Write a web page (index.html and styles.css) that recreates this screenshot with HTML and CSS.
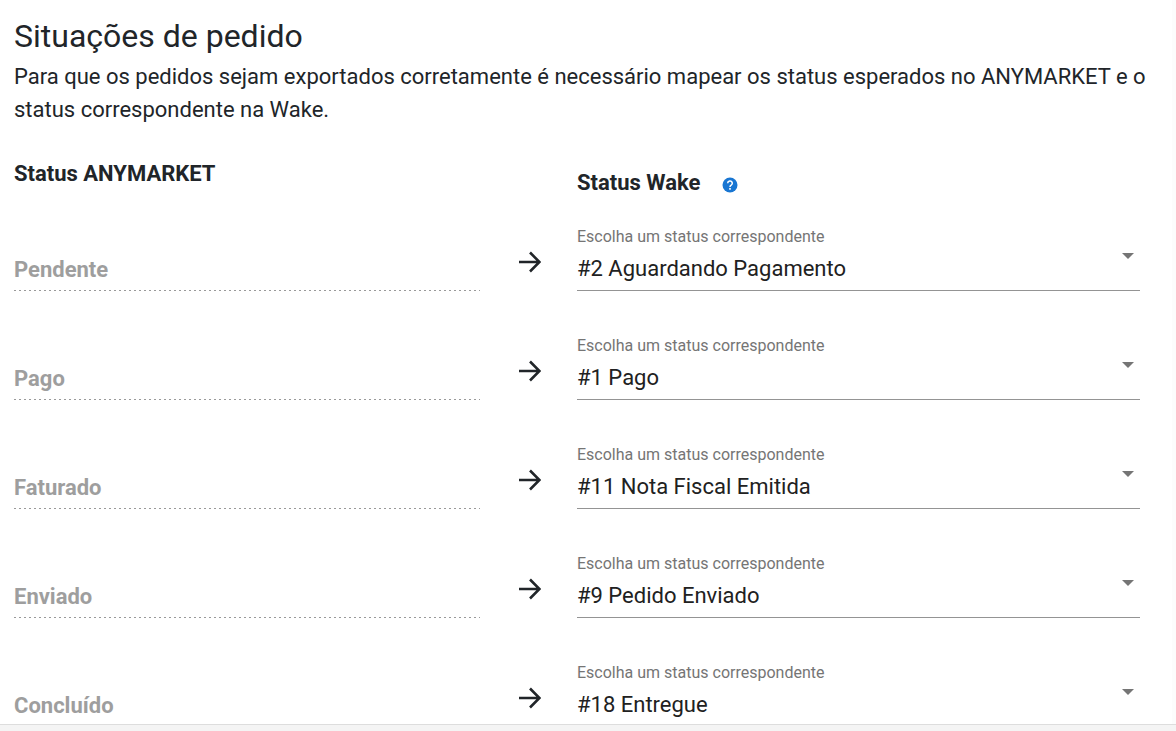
FILE: index.html
```html
<!DOCTYPE html>
<html lang="pt-BR">
<head>
<meta charset="utf-8">
<title>Situações de pedido</title>
<link rel="stylesheet" href="styles.css">
</head>
<body>
<main class="panel">
  <h1 class="title">Situações de pedido</h1>
  <p class="intro">Para que os pedidos sejam exportados corretamente é necessário mapear os status esperados no ANYMARKET e o status correspondente na Wake.</p>
  <div class="row heads">
    <h2 class="head" id="head-any">Status ANYMARKET</h2>
    <div class="head-wake">
      <h2 class="head">Status Wake</h2>
      <button class="help" type="button" aria-label="Ajuda">
        <svg viewBox="0 0 16 16" width="16" height="16"><circle cx="8" cy="8" r="7.5" fill="#1976d2"/><path d="M5.7 6.3a2.3 2.3 0 1 1 3.5 1.9c-.8.5-1.2.8-1.2 1.7" fill="none" stroke="#fff" stroke-width="1.5"/><path d="M7.2 11.1h1.6v1.6H7.2z" fill="#fff"/></svg>
      </button>
    </div>
  </div>
  <div class="row">
    <input class="source" type="text" value="Pendente" aria-labelledby="head-any" disabled>
    <svg class="arrow" viewBox="0 0 24 24"><path d="M2 12h20M13 2.500l9.500 9.500-9.500 9.500"/></svg>
    <div class="field">
      <label class="label" for="s1">Escolha um status correspondente</label>
      <select class="select" id="s1"><option>#2 Aguardando Pagamento</option></select>
      <svg class="caret" viewBox="0 0 12 6"><path d="M0 0h12L6 6z"/></svg>
    </div>
  </div>
  <div class="row">
    <input class="source" type="text" value="Pago" aria-labelledby="head-any" disabled>
    <svg class="arrow" viewBox="0 0 24 24"><path d="M2 12h20M13 2.500l9.500 9.500-9.500 9.500"/></svg>
    <div class="field">
      <label class="label" for="s2">Escolha um status correspondente</label>
      <select class="select" id="s2"><option>#1 Pago</option></select>
      <svg class="caret" viewBox="0 0 12 6"><path d="M0 0h12L6 6z"/></svg>
    </div>
  </div>
  <div class="row">
    <input class="source" type="text" value="Faturado" aria-labelledby="head-any" disabled>
    <svg class="arrow" viewBox="0 0 24 24"><path d="M2 12h20M13 2.500l9.500 9.500-9.500 9.500"/></svg>
    <div class="field">
      <label class="label" for="s3">Escolha um status correspondente</label>
      <select class="select" id="s3"><option>#11 Nota Fiscal Emitida</option></select>
      <svg class="caret" viewBox="0 0 12 6"><path d="M0 0h12L6 6z"/></svg>
    </div>
  </div>
  <div class="row">
    <input class="source" type="text" value="Enviado" aria-labelledby="head-any" disabled>
    <svg class="arrow" viewBox="0 0 24 24"><path d="M2 12h20M13 2.500l9.500 9.500-9.500 9.500"/></svg>
    <div class="field">
      <label class="label" for="s4">Escolha um status correspondente</label>
      <select class="select" id="s4"><option>#9 Pedido Enviado</option></select>
      <svg class="caret" viewBox="0 0 12 6"><path d="M0 0h12L6 6z"/></svg>
    </div>
  </div>
  <div class="row">
    <input class="source" type="text" value="Concluído" aria-labelledby="head-any" disabled>
    <svg class="arrow" viewBox="0 0 24 24"><path d="M2 12h20M13 2.500l9.500 9.500-9.500 9.500"/></svg>
    <div class="field">
      <label class="label" for="s5">Escolha um status correspondente</label>
      <select class="select" id="s5"><option>#18 Entregue</option></select>
      <svg class="caret" viewBox="0 0 12 6"><path d="M0 0h12L6 6z"/></svg>
    </div>
  </div>
</main>
<footer class="footer"></footer>
</body>
</html>
```
FILE: styles.css
```css
* {
  box-sizing: border-box;
}

body {
  margin: 0;
  height: 100vh;
  display: flex;
  flex-direction: column;
  overflow: hidden;
  background: #fff;
  color: #212529;
  font-family: Roboto, sans-serif;
  font-size: 22px;
}

.panel {
  flex: 1;
  min-height: 0;
  overflow: hidden;
  padding: 12px 14px 0;
  border-right: 4px solid #fcfcfc;
}

.title {
  margin: 0;
  font-size: 32px;
  font-weight: 400;
  line-height: 48px;
}

.intro {
  margin: 0 0 28px;
  line-height: 33px;
}

.row {
  display: grid;
  grid-template-columns: 466fr 97fr 563fr;
  align-items: end;
  padding: 0 18px 35px 0;
}

.heads {
  align-items: start;
  padding-bottom: 14px;
}

.head {
  margin: 0;
  font-size: 22px;
  font-weight: 700;
  line-height: 40px;
}

.head-wake {
  grid-column: 3;
  display: flex;
  align-items: center;
  gap: 22px;
  padding-top: 9px;
}

.help {
  display: flex;
  padding: 4px 0 0;
  border: 0;
  background: none;
}

.source {
  width: 100%;
  height: 43px;
  padding: 0;
  border: 0;
  background: repeating-linear-gradient(90deg, #999 0 2px, transparent 2px 5px) bottom / 100% 1px no-repeat;
  color: #9e9e9e;
  font: 700 22px/33px Roboto, sans-serif;
}

.arrow {
  width: 24px;
  height: 24px;
  margin-bottom: 17px;
  justify-self: center;
  fill: none;
  stroke: #212529;
  stroke-width: 2.6;
}

.field {
  position: relative;
  border-bottom: 1px solid #949494;
}

.label {
  display: block;
  color: #757575;
  font-size: 16px;
  line-height: 24px;
  padding-top: 8px;
}

.select {
  display: block;
  width: 100%;
  height: 41px;
  padding: 0 0 2px;
  border: 0;
  appearance: none;
  background: none;
  color: #212121;
  font: 400 22px/33px Roboto, sans-serif;
}

.caret {
  position: absolute;
  right: 6px;
  bottom: 31px;
  width: 12px;
  height: 6px;
  fill: #757575;
  pointer-events: none;
}

.footer {
  height: 7px;
  border-top: 1px solid #ddd;
  background: #f4f4f4;
}
```
